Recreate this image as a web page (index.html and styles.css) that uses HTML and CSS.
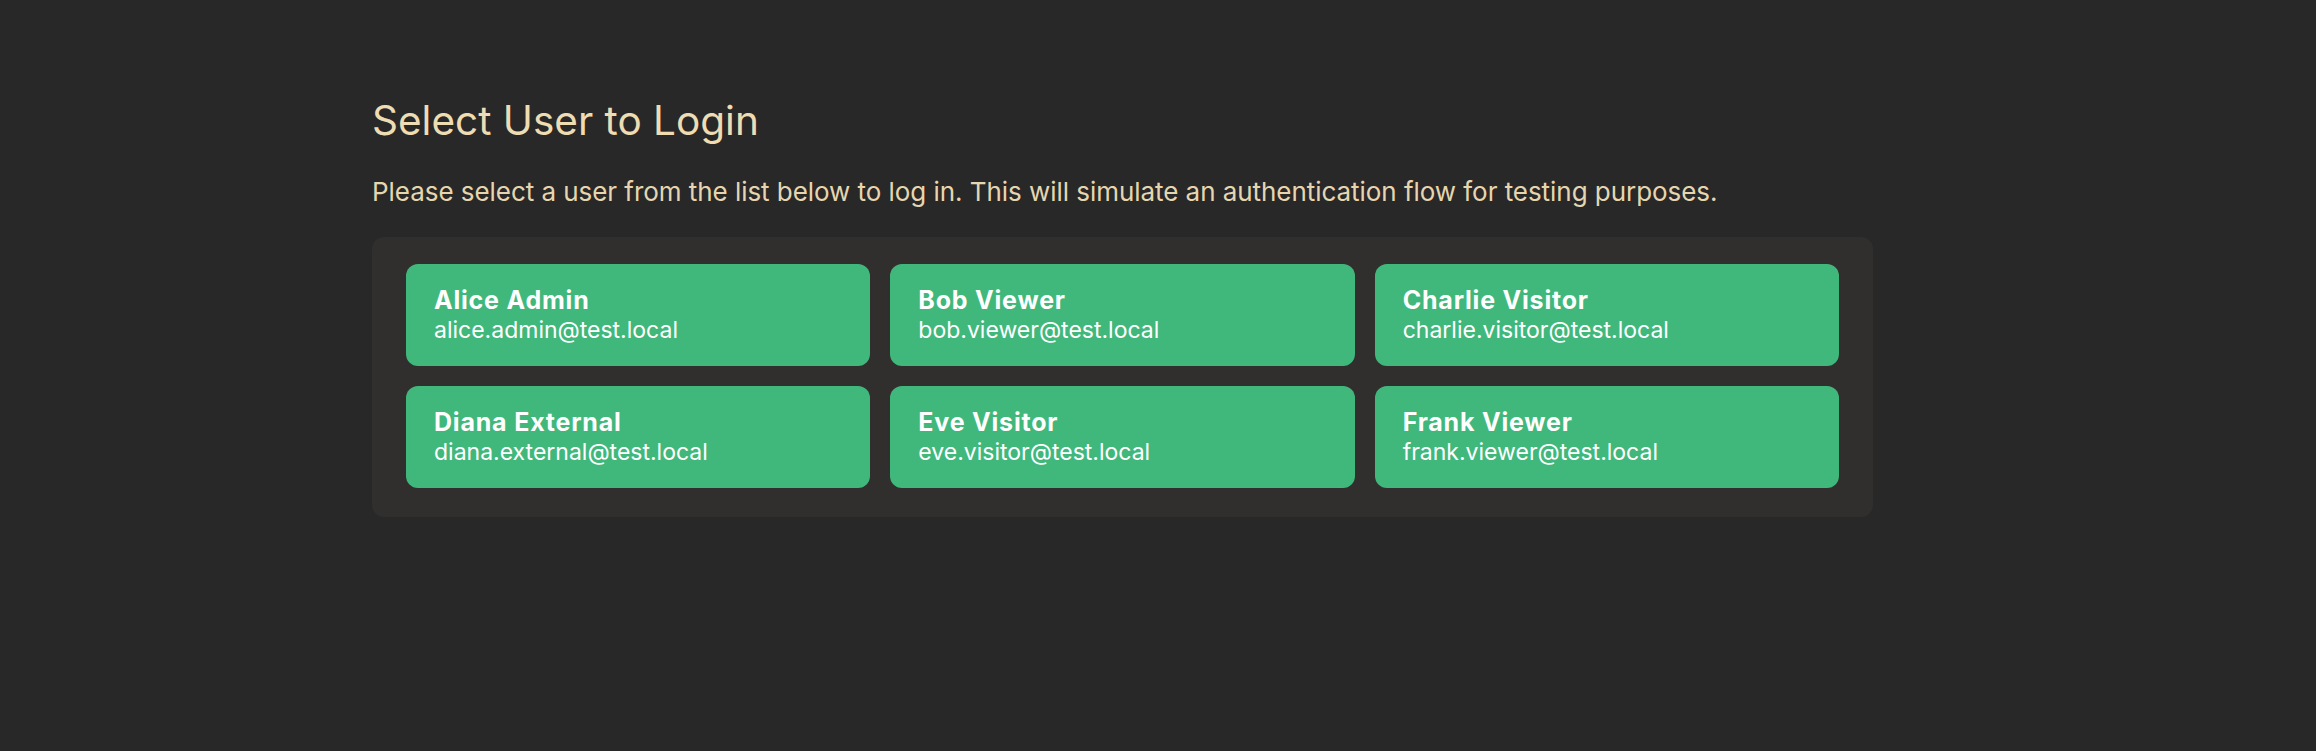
FILE: index.html
```html
<!DOCTYPE html>
<html lang="en">
<head>
<meta charset="utf-8">
<title>Select User to Login</title>
<link rel="stylesheet" href="styles.css">
</head>
<body>
<main class="page">
  <h1 class="title">Select User to Login</h1>
  <p class="intro">Please select a user from the list below to log in. This will simulate an authentication flow for testing purposes.</p>
  <section class="panel">
    <button class="user"><span class="name">Alice Admin</span><span class="email">alice.admin@test.local</span></button>
    <button class="user"><span class="name">Bob Viewer</span><span class="email">bob.viewer@test.local</span></button>
    <button class="user"><span class="name">Charlie Visitor</span><span class="email">charlie.visitor@test.local</span></button>
    <button class="user"><span class="name">Diana External</span><span class="email">diana.external@test.local</span></button>
    <button class="user"><span class="name">Eve Visitor</span><span class="email">eve.visitor@test.local</span></button>
    <button class="user"><span class="name">Frank Viewer</span><span class="email">frank.viewer@test.local</span></button>
  </section>
</main>
</body>
</html>
```

FILE: styles.css
```css
html, body {
  margin: 0;
  padding: 0;
  background: #282828;
}

body {
  font-family: Inter, "Noto Sans", sans-serif;
  height: 751px;
  overflow: hidden;
}

.page {
  width: 1501px;
  padding: 97px 0 0 372px;
}

.title {
  margin: 0;
  font-size: 40.5px;
  line-height: 48px;
  font-weight: 400;
  color: #eedcb3;
}

.intro {
  margin: 29px 0 27px;
  font-size: 26px;
  line-height: 36px;
  font-weight: 400;
  color: #e6d6b0;
  letter-spacing: -0.05px;
}

.panel {
  display: grid;
  grid-template-columns: repeat(3, 1fr);
  gap: 20px;
  padding: 27px 34px 29px;
  background: #302f2e;
  border-radius: 12px;
}

.user {
  display: flex;
  flex-direction: column;
  align-items: flex-start;
  padding: 20px 28px 22px;
  border: 0;
  border-radius: 12px;
  background: #40b87c;
  color: #ffffff;
  font-family: inherit;
  text-align: left;
  cursor: pointer;
}

.name {
  font-size: 25px;
  line-height: 32px;
  font-weight: 700;
  letter-spacing: 0.8px;
}

.email {
  font-size: 23px;
  line-height: 28px;
  font-weight: 400;
}
```
